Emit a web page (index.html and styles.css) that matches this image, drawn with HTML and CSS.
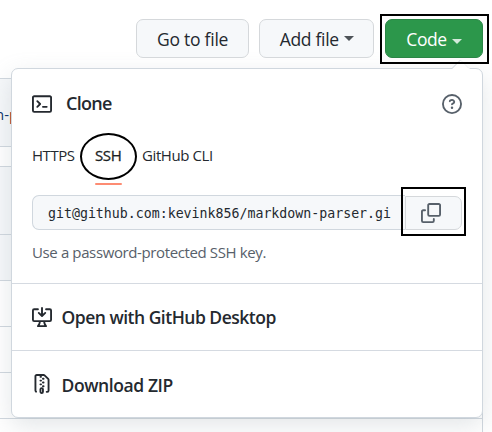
FILE: index.html
```html
<!DOCTYPE html>
<html lang="en">
<head>
<meta charset="utf-8">
<title>Clone menu</title>
<link rel="stylesheet" href="styles.css">
</head>
<body>
<div class="files">
  <div class="file-head"><span class="branch">n-</span><span class="branch-tail">p</span></div>
  <div class="file-gap"></div>
  <div class="file-row tall"></div>
  <div class="file-row shade"></div>
  <div class="file-row"></div>
  <div class="file-row"></div>
  <div class="file-row"></div>
  <div class="file-row"></div>
</div>
<main class="page">
  <div class="toolbar">
    <button class="btn goto">Go to file</button>
    <button class="btn add">Add file<i class="caret"></i></button>
    <button class="btn code">Code<i class="caret"></i></button>
  </div>
  <section class="menu">
    <svg class="pointer" width="20" height="10" viewBox="0 0 20 10"><path d="M1 10L10 1L19 10" fill="#fff"/><path d="M1 9.5L9.5 1" fill="none" stroke="#ccd3dc"/><path d="M9.5 1L18 9.5" fill="none" stroke="#eceff2"/></svg>
    <div class="clone">
      <div class="head">
        <svg width="20" height="20" viewBox="0 0 16 16" fill="#24292f"><path fill-rule="evenodd" d="M0 2.75C0 1.784.784 1 1.75 1h12.5c.966 0 1.75.784 1.75 1.75v10.5A1.75 1.75 0 0 1 14.25 15H1.75A1.75 1.75 0 0 1 0 13.25Zm1.75-.25a.25.25 0 0 0-.25.25v10.5c0 .138.112.25.25.25h12.5a.25.25 0 0 0 .25-.25V2.75a.25.25 0 0 0-.25-.25ZM7.25 8a.75.75 0 0 1-.22.53l-2.25 2.25a.75.75 0 1 1-1.06-1.06L5.44 8 3.72 6.28a.75.75 0 1 1 1.06-1.06l2.25 2.25c.141.14.22.331.22.53Zm1.5 1.5h3a.75.75 0 0 1 0 1.5h-3a.75.75 0 0 1 0-1.5Z"/></svg>
        <h2>Clone</h2>
        <svg class="help" width="20" height="20" viewBox="0 0 16 16" fill="#57606a"><path fill-rule="evenodd" d="M0 8a8 8 0 1 1 16 0A8 8 0 0 1 0 8Zm8-6.5a6.5 6.5 0 1 0 0 13 6.5 6.5 0 0 0 0-13ZM6.92 6.085h.001a.749.749 0 1 1-1.342-.67c.169-.339.436-.701.849-.977C6.845 4.16 7.369 4 8 4a2.756 2.756 0 0 1 1.637.525c.503.377.863.965.863 1.725 0 .448-.115.83-.329 1.15-.205.307-.47.513-.692.662-.109.072-.22.138-.313.195l-.006.004a6.24 6.24 0 0 0-.26.16.952.952 0 0 0-.276.245.75.75 0 0 1-1.248-.832c.184-.264.42-.489.692-.661.103-.067.207-.132.313-.195l.007-.004c.1-.061.182-.11.258-.161a.969.969 0 0 0 .277-.245C8.96 6.514 9 6.427 9 6.25a.612.612 0 0 0-.262-.525A1.27 1.27 0 0 0 8 5.5c-.369 0-.595.09-.74.187a1.01 1.01 0 0 0-.34.398ZM9 11a1 1 0 1 1-2 0 1 1 0 0 1 2 0Z"/></svg>
      </div>
      <nav class="tabs">
        <span class="https">HTTPS</span>
        <span class="ssh">SSH</span>
        <span class="cli">GitHub CLI</span>
      </nav>
      <div class="field">
        <div class="url">git@github.com:kevink856/markdown-parser.gi</div>
        <div class="copy"><svg width="20" height="20" viewBox="0 0 16 16" fill="#57606a"><path d="M0 6.75C0 5.784.784 5 1.75 5h1.5a.75.75 0 0 1 0 1.5h-1.5a.25.25 0 0 0-.25.25v7.5c0 .138.112.25.25.25h7.5a.25.25 0 0 0 .25-.25v-1.5a.75.75 0 0 1 1.5 0v1.5A1.75 1.75 0 0 1 9.25 16h-7.5A1.75 1.75 0 0 1 0 14.25Z"/><path fill-rule="evenodd" d="M5 1.75C5 .784 5.784 0 6.75 0h7.5C15.216 0 16 .784 16 1.75v7.5A1.75 1.75 0 0 1 14.25 11h-7.5A1.75 1.75 0 0 1 5 9.25Zm1.75-.25a.25.25 0 0 0-.25.25v7.5c0 .138.112.25.25.25h7.5a.25.25 0 0 0 .25-.25v-7.5a.25.25 0 0 0-.25-.25Z"/></svg></div>
      </div>
      <p class="note">Use a password-protected SSH key.</p>
    </div>
    <div class="item">
      <svg width="20" height="20" viewBox="0 0 16 16" fill="#24292f"><path d="M8 .75V7M5.4 4.7L8 7.2L10.6 4.7" fill="none" stroke="#24292f" stroke-width="1.5" stroke-linecap="round" stroke-linejoin="round"/><path d="M1.573 2.573a.25.25 0 0 0-.073.177v7.5a.25.25 0 0 0 .25.25h12.5a.25.25 0 0 0 .25-.25v-7.5a.25.25 0 0 0-.25-.25h-3a.75.75 0 1 1 0-1.5h3A1.75 1.75 0 0 1 16 2.75v7.5A1.75 1.75 0 0 1 14.25 12h-3.727c.099 1.041.52 1.872 1.292 2.757A.752.752 0 0 1 11.25 16h-6.5a.75.75 0 0 1-.565-1.243c.772-.885 1.192-1.716 1.292-2.757H1.75A1.75 1.75 0 0 1 0 10.25v-7.5A1.75 1.75 0 0 1 1.75 1h3a.75.75 0 0 1 0 1.5h-3a.25.25 0 0 0-.177.073ZM6.982 12a5.72 5.72 0 0 1-.765 2.5h3.566a5.72 5.72 0 0 1-.765-2.5H6.982Z"/></svg>
      <span class="desktop">Open with GitHub Desktop</span>
    </div>
    <div class="item">
      <svg width="20" height="20" viewBox="0 0 16 16" fill="#24292f"><path d="M3.5 1.75v11.5c0 .09.048.173.126.217a.75.75 0 0 1-.752 1.298A1.748 1.748 0 0 1 2 13.25V1.75C2 .784 2.784 0 3.75 0h5.586c.464 0 .909.185 1.237.513l2.914 2.914c.329.328.513.773.513 1.237v8.586A1.75 1.75 0 0 1 12.25 15h-.5a.75.75 0 0 1 0-1.5h.5a.25.25 0 0 0 .25-.25V4.664a.25.25 0 0 0-.073-.177L9.513 1.573a.25.25 0 0 0-.177-.073H7.25a.75.75 0 0 1 0 1.5h-.5a.75.75 0 0 1 0-1.5h-3a.25.25 0 0 0-.25.25Z"/><path fill-rule="evenodd" d="M8.75 3h.5a.75.75 0 0 1 0 1.5h-.5a.75.75 0 0 1 0-1.5ZM6 5.25a.75.75 0 0 1 .75-.75h.5a.75.75 0 0 1 0 1.5h-.5A.75.75 0 0 1 6 5.25Zm2 1.5A.75.75 0 0 1 8.75 6h.5a.75.75 0 0 1 0 1.5h-.5A.75.75 0 0 1 8 6.75Zm-1.25.75h.5a.75.75 0 0 1 0 1.5h-.5a.75.75 0 0 1 0-1.5ZM8 9.75A.75.75 0 0 1 8.75 9h.5a.75.75 0 0 1 0 1.5h-.5A.75.75 0 0 1 8 9.75Zm-2 2v2.5c0 .966.784 1.75 1.75 1.75A1.75 1.75 0 0 0 9.5 14.25v-2a1.75 1.75 0 0 0-3.5 0Zm1.5.5a.25.25 0 0 1 .5 0v2a.25.25 0 0 1-.5 0Z"/></svg>
      <span class="zip">Download ZIP</span>
    </div>
  </section>
</main>
</body>
</html>
```
FILE: styles.css
```css
*, *::before, *::after { box-sizing: border-box; }

body {
  margin: 0;
  width: 492px;
  height: 432px;
  position: relative;
  overflow: hidden;
  background: #fff;
  color: #24292f;
  font-family: "Open Sans", "Noto Sans", sans-serif;
  font-size: 15px;
}

/* File list partly hidden behind the menu */
.files {
  position: absolute;
  top: 78px;
  left: 0;
  width: 483px;
  height: 354px;
  overflow: hidden;
  border-right: 1px solid #d0d7de;
}
.file-head, .file-gap, .file-row { border-top: 1px solid #d0d7de; height: 46px; }
.file-head {
  height: 68px;
  background: #f6f8fa;
  display: flex;
  padding-top: 25px;
  line-height: 20px;
  white-space: nowrap;
}
.branch { color: #0a3069; margin-left: -5px; }
.branch-tail { color: #7a2020; }
.file-gap { height: 20px; }
.file-row.tall { height: 68px; background: #f6f8fa; }
.file-row.shade { background: #f6f8fa; }

.page { position: relative; padding: 19px 9px 0 12px; }

.toolbar { position: relative; z-index: 1; display: flex; gap: 11px; height: 39px; margin-left: 124px; }
.btn {
  display: flex;
  align-items: center;
  height: 39px;
  padding: 0 0 0 20px;
  border: 1px solid #d5d8db;
  border-radius: 7px;
  background: #f6f8fa;
  color: #24292f;
  font: 17.5px/24px "Open Sans", "Noto Sans", sans-serif;
  white-space: nowrap;
}
.goto { width: 113px; letter-spacing: -.25px; }
.add { width: 116px; letter-spacing: -.3px; margin-left: -1px; }
.code {
  position: relative;
  width: 98px;
  background: #2c974b;
  border-color: #2a8546;
  color: #fff;
  letter-spacing: -.4px;
}
.code::after {
  content: "";
  position: absolute;
  left: -6px;
  top: -6px;
  width: 109px;
  height: 50px;
  border: 2px solid #000;
}
.caret {
  margin-left: 5px;
  border: 5px solid transparent;
  border-top-color: currentColor;
  border-bottom: 0;
  opacity: .8;
}
.code .caret { margin-top: 5px; }

.menu {
  position: relative;
  width: 472px;
  height: 350px;
  margin: 10px 0 0 -1px;
  border: 1px solid #d0d7de;
  border-radius: 7px;
  background: #fff;
  box-shadow: 0 8px 24px rgba(140, 149, 159, .24);
}
.pointer { position: absolute; right: 11px; top: -10px; }

.clone { padding: 25px 20px 0 20px; height: 214px; }
.head { display: flex; align-items: center; height: 20px; }
h2 { margin: -2px 0 0 14px; font-size: 18px; font-weight: 600; line-height: 20px; letter-spacing: -.7px; }
.help { margin-left: auto; }

.tabs { display: flex; height: 47px; margin-top: 19px; font-size: 15px; line-height: 44px; white-space: nowrap; }
.https { width: 63px; letter-spacing: -.45px; }
.ssh { position: relative; width: 47px; color: #1b1f24; -webkit-text-stroke: .3px; letter-spacing: -.4px; }
.ssh::before {
  content: "";
  position: absolute;
  left: -15px;
  top: 0;
  width: 57px;
  height: 47px;
  border: 2px solid #000;
  border-radius: 50%;
}
.ssh::after {
  content: "";
  position: absolute;
  left: 0;
  top: 50px;
  width: 27px;
  height: 2px;
  border-radius: 1px;
  background: #fd8c73;
}
.cli { letter-spacing: -.4px; }

.field { display: flex; height: 35px; margin-top: 15px; }
.url {
  flex: none;
  width: 373px;
  padding-left: 15px;
  border: 1px solid #d0d7de;
  border-right: 0;
  border-radius: 7px 0 0 7px;
  background: #f6f8fa;
  font: 13.25px/35px "DejaVu Sans Mono", monospace;
  white-space: nowrap;
}
.copy {
  flex: none;
  display: flex;
  align-items: center;
  width: 57px;
  height: 34px;
  margin-top: 1px;
  padding-left: 15px;
  border: 1px solid #d5d8db;
  border-radius: 0 7px 7px 0;
  background: #f6f8fa;
  position: relative;
}
.copy::after {
  content: "";
  position: absolute;
  left: -5px;
  top: -10px;
  width: 65px;
  height: 49px;
  border: 2px solid #000;
}
.note { margin: 12px 0 0; color: #57606a; font-size: 15px; line-height: 20px; letter-spacing: -.38px; white-space: nowrap; }

.item {
  display: flex;
  align-items: center;
  height: 67px;
  padding-left: 20px;
  border-top: 1px solid #d5dae1;
  font-size: 17.5px;
  font-weight: 600;
  white-space: nowrap;
}
.item span { margin-left: 9.5px; }
.desktop { letter-spacing: -.5px; }
.zip { letter-spacing: -.4px; position: relative; top: 1px; }
```
